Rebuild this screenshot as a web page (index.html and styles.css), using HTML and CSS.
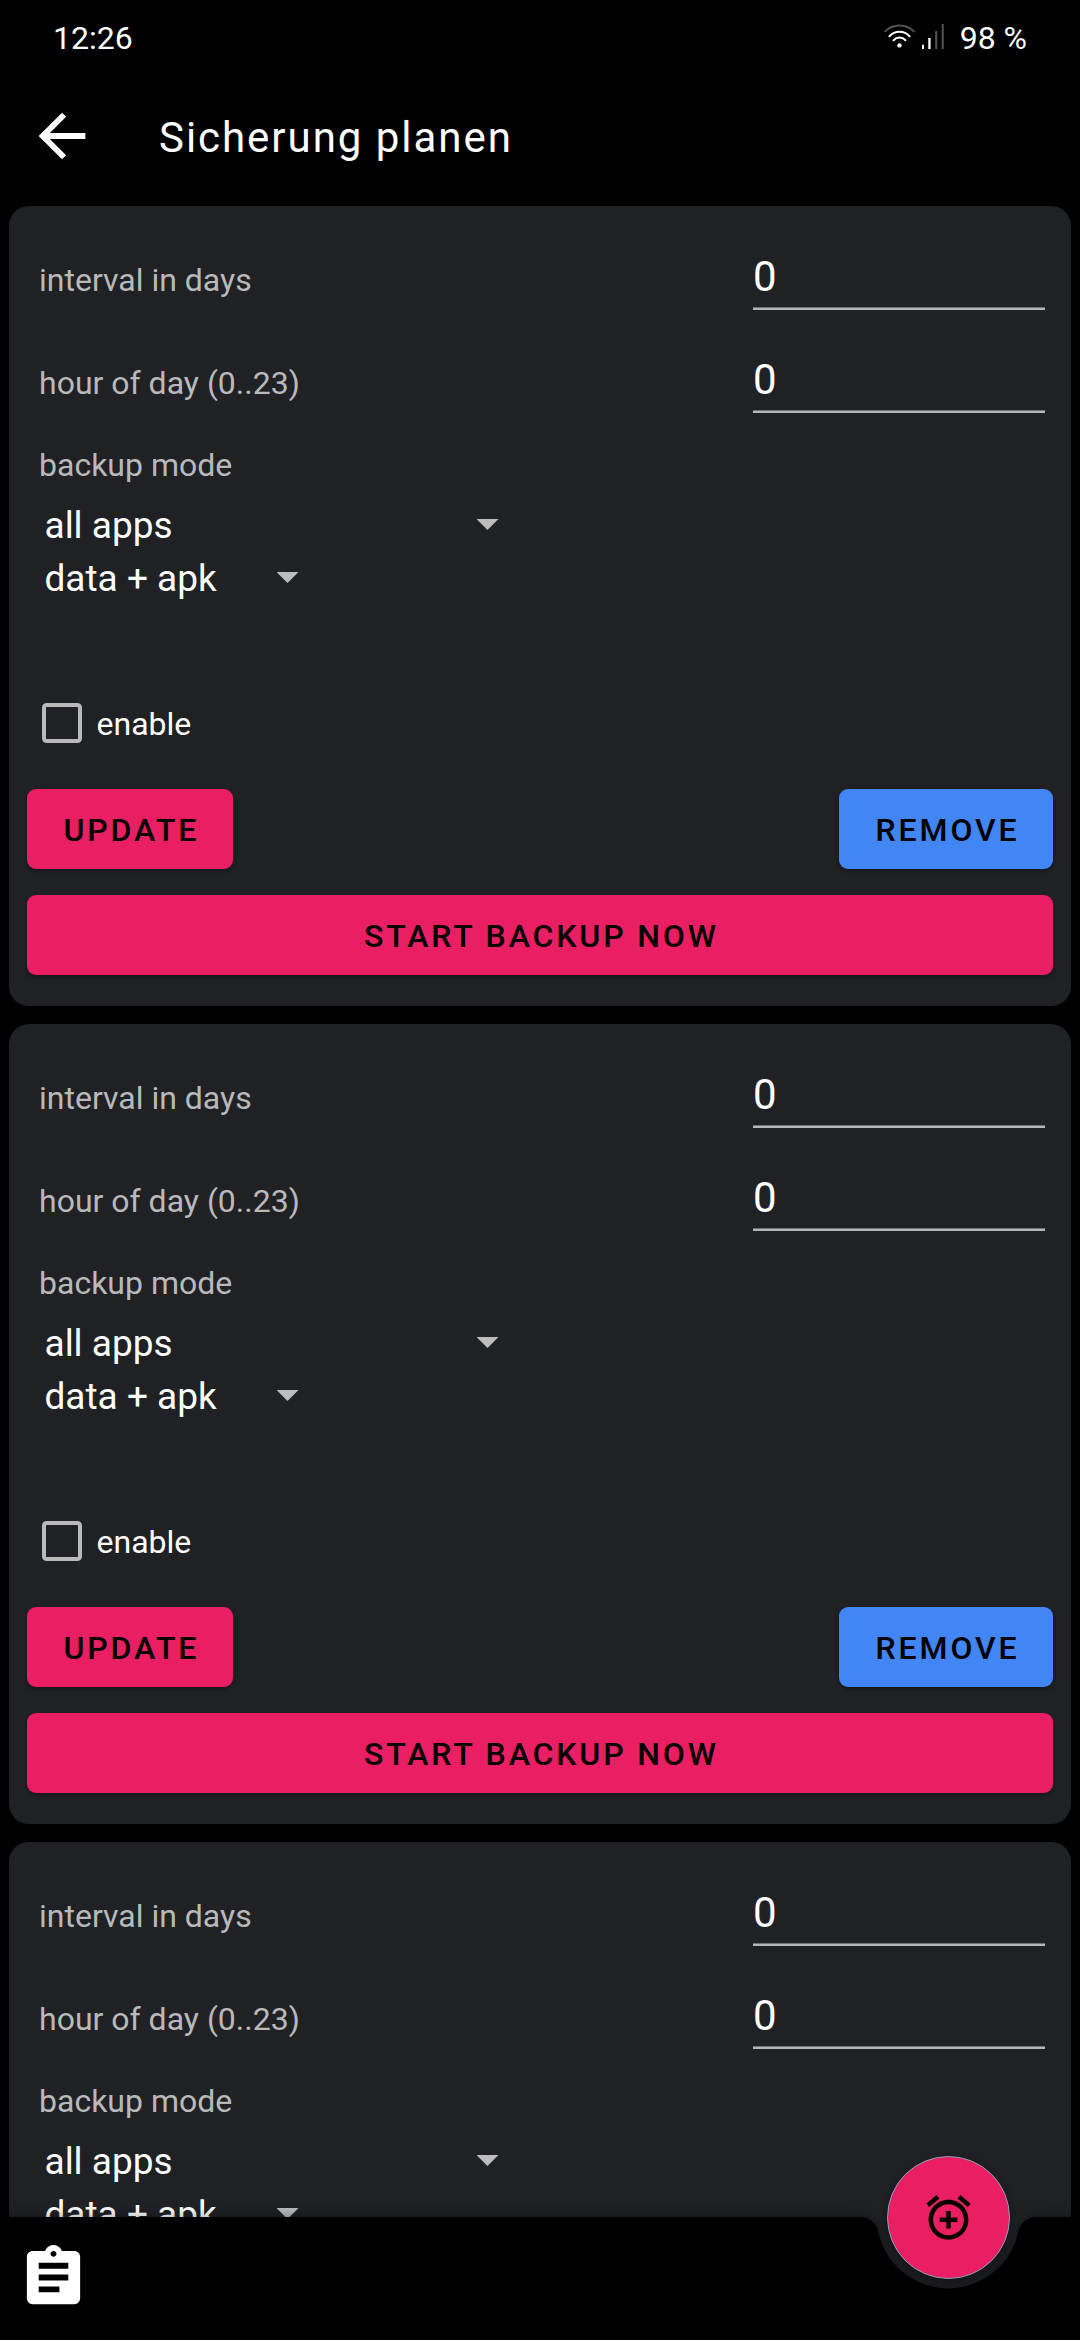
FILE: index.html
```html
<!DOCTYPE html>
<html lang="de">
<head>
<meta charset="utf-8">
<title>Sicherung planen</title>
<link rel="stylesheet" href="styles.css">
</head>
<body>
<div class="screen">
  <div class="status">
    <span class="clock">12:26</span>
    <svg class="wifi" width="31" height="28" viewBox="0 0 31 28" fill="none" stroke="#fff" stroke-width="2" stroke-linecap="round">
      <path stroke="#555" d="M1.2 9.4A20.5 20.5 0 0 1 29.8 9.4"/>
      <path d="M5.4 14.2A13.8 13.8 0 0 1 25.6 14.2"/>
      <path d="M9.6 18.2A8 8 0 0 1 21.4 18.2"/>
      <circle cx="15.5" cy="23.4" r="2.2" fill="#fff" stroke="none"/>
    </svg>
    <svg class="signal" width="22" height="28" viewBox="0 0 22 28">
      <path fill="#fff" d="M0 22.8h2V27H0zM6.3 16h2.3v11H6.3z"/>
      <path fill="#555" d="M13.2 9h2v18h-2zM19.7 2h2v25h-2z"/>
    </svg>
    <span class="battery">98 %</span>
  </div>

  <header class="appbar">
    <svg class="back" width="70" height="70" viewBox="0 0 24 24" fill="#fff"><path d="M20 11H7.83l5.59-5.59L12 4l-8 8 8 8 1.41-1.41L7.83 13H20v-2z"/></svg>
    <h1 class="title">Sicherung planen</h1>
  </header>

  <main class="list">
    <section class="card">
      <div class="field"><span class="label">interval in days</span><span class="input">0</span></div>
      <div class="field"><span class="label">hour of day (0..23)</span><span class="input">0</span></div>
      <div class="label mode">backup mode</div>
      <div class="spinner wide"><span>all apps</span><i class="caret"></i></div>
      <div class="spinner"><span>data + apk</span><i class="caret"></i></div>
      <div class="check"><i class="box"></i><span>enable</span></div>
      <div class="actions"><span class="btn">UPDATE</span><span class="btn blue">REMOVE</span></div>
      <div class="btn full">START BACKUP NOW</div>
    </section>
    <section class="card">
      <div class="field"><span class="label">interval in days</span><span class="input">0</span></div>
      <div class="field"><span class="label">hour of day (0..23)</span><span class="input">0</span></div>
      <div class="label mode">backup mode</div>
      <div class="spinner wide"><span>all apps</span><i class="caret"></i></div>
      <div class="spinner"><span>data + apk</span><i class="caret"></i></div>
      <div class="check"><i class="box"></i><span>enable</span></div>
      <div class="actions"><span class="btn">UPDATE</span><span class="btn blue">REMOVE</span></div>
      <div class="btn full">START BACKUP NOW</div>
    </section>
    <section class="card">
      <div class="field"><span class="label">interval in days</span><span class="input">0</span></div>
      <div class="field"><span class="label">hour of day (0..23)</span><span class="input">0</span></div>
      <div class="label mode">backup mode</div>
      <div class="spinner wide"><span>all apps</span><i class="caret"></i></div>
      <div class="spinner"><span>data + apk</span><i class="caret"></i></div>
    </section>
  </main>

  <footer class="bottombar">
    <svg class="notch" width="1080" height="123" viewBox="0 0 1080 123"><path d="M0 0H860.6A18 18 0 0 1 878.1 14.3A71.7 71.7 0 0 0 1018.5 14.3A18 18 0 0 1 1036 0H1080V123H0Z"/></svg>
    <svg class="log" width="71" height="71" viewBox="0 0 24 24" fill="#fff"><path d="M19 3h-4.18C14.4 1.84 13.3 1 12 1c-1.3 0-2.4.84-2.82 2H5c-1.1 0-2 .9-2 2v14c0 1.1.9 2 2 2h14c1.1 0 2-.9 2-2V5c0-1.1-.9-2-2-2zm-7 0c.55 0 1 .45 1 1s-.45 1-1 1-1-.45-1-1 .45-1 1-1zm2 14H7v-2h7v2zm3-4H7v-2h10v2zm0-4H7V7h10v2z"/></svg>
    <div class="fab">
      <svg width="53" height="53" viewBox="0 0 24 24"><path d="M7.88 3.39L6.6 1.86 2 5.71l1.29 1.53 4.59-3.85zM22 5.72l-4.6-3.86-1.29 1.53 4.6 3.86L22 5.72zM12 4c-4.97 0-9 4.03-9 9s4.02 9 9 9c4.97 0 9-4.03 9-9s-4.03-9-9-9zm0 16c-3.87 0-7-3.13-7-7s3.13-7 7-7 7 3.13 7 7-3.13 7-7 7zm1-11h-2v3H8v2h3v3h2v-3h3v-2h-3V9z"/></svg>
    </div>
  </footer>
</div>
</body>
</html>
```
FILE: styles.css
```css
* { box-sizing: border-box; }

body {
  margin: 0;
  background: #000;
  color: #fff;
  font-family: Roboto, sans-serif;
  font-size: 32px;
}

.screen {
  position: relative;
  width: 1080px;
  height: 2340px;
  overflow: hidden;
  display: flex;
  flex-direction: column;
}

.status {
  flex: none;
  display: flex;
  height: 72px;
  padding: 19px 53px 0;
  line-height: 38px;
}
.clock { margin-right: auto; }
.wifi { margin: 3px 7px 0 0; }
.signal { margin: 3px 16px 0 0; }

.appbar {
  flex: none;
  display: flex;
  align-items: center;
  height: 128px;
  padding-left: 27px;
}
.title {
  margin: 4px 0 0 62px;
  font-size: 42px;
  font-weight: 400;
  line-height: 50px;
  letter-spacing: 1.96px;
}

.list {
  flex: none;
  display: flex;
  flex-direction: column;
  gap: 18px;
  padding: 6px 9px 0;
}

.card {
  height: 800px;
  padding: 46px 18px 0;
  background: #202125;
  border-radius: 20px;
}

.field {
  display: flex;
  justify-content: space-between;
  align-items: baseline;
  height: 58px;
  margin-bottom: 45px;
  padding: 0 8px 0 12px;
}
.label {
  color: #b9b9ba;
  line-height: 38px;
}
.input {
  width: 292px;
  height: 58px;
  font-size: 42px;
  line-height: 50px;
  border-bottom: 2px solid #b6b6b9;
  box-shadow: inset 0 -1px #707175;
}
.mode { margin: -12px 12px 15px; }

.spinner {
  display: flex;
  justify-content: space-between;
  align-items: center;
  width: 254px;
  margin-left: 17.5px;
  font-size: 37px;
  line-height: 53px;
}
.spinner.wide { width: 454px; }
.caret {
  width: 22px;
  height: 11px;
  margin-top: -2px;
  background: #bdbdbd;
  clip-path: polygon(0 0, 100% 0, 50% 100%);
}

.check {
  display: flex;
  align-items: center;
  gap: 14.5px;
  margin: 98px 0 46px 15px;
  height: 40px;
  line-height: 40px;
}
.check span { padding-top: 2px; }
.box {
  width: 40px;
  height: 40px;
  border: 4px solid #b9b9ba;
  border-radius: 4.5px;
}

.actions {
  display: flex;
  justify-content: space-between;
  margin-bottom: 26px;
}
.btn {
  height: 80px;
  padding: 0 33.6px 0 36.4px;
  border-radius: 9px;
  background: #e91e63;
  box-shadow: 0 2px 4px rgba(0, 0, 0, .35);
  color: #000;
  font-weight: 500;
  line-height: 82px;
  letter-spacing: 2.86px;
}
.blue { background: #4285f4; }
.full { text-align: center; }

.bottombar {
  position: absolute;
  left: 0;
  bottom: 0;
  width: 1080px;
  height: 123px;
}
.notch {
  position: absolute;
  inset: 0;
  overflow: visible;
  filter: drop-shadow(0 0 7px rgba(0, 0, 0, .4));
}
.log {
  position: absolute;
  left: 17.5px;
  top: 25.2px;
}
.fab {
  position: absolute;
  left: 887px;
  top: -61px;
  width: 123px;
  height: 123px;
  display: flex;
  align-items: center;
  justify-content: center;
  border: 1px solid #8aa3b8;
  border-radius: 50%;
  background: #e91e63;
  box-shadow: 0 3px 10px rgba(0, 0, 0, .4);
}
```
